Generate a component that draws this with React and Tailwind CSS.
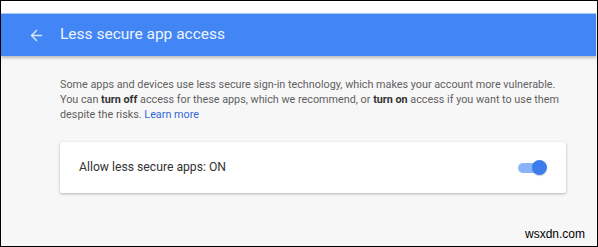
import { ArrowLeft } from "lucide-react";

const App = () => {
  return (
    <div className="h-[247px] w-[598px] overflow-hidden border border-black bg-white font-['Roboto',sans-serif]">
      <div className="flex h-full flex-col">
        {/* top white strip */}
        <div className="h-[12px] shrink-0 bg-white" />

        {/* Header */}
        <div className="z-10 mr-[1px] flex h-[43px] shrink-0 items-center border-t border-[#a9c8f7] bg-[#4285f4] shadow-[0_2px_3px_rgba(0,0,0,0.25)]">
          <ArrowLeft className="ml-[27px] h-[17px] w-[17px] text-[#dbe8fd]" strokeWidth={2} />
          <h1 className="ml-[15px] text-[15.5px] leading-none text-[#eef4fe]">Less secure app access</h1>
        </div>

        {/* Body */}
        <div className="relative flex-1 bg-[#f7f7f7] px-[59px] pt-[21px]">
          <p className="whitespace-nowrap text-[10.8px] leading-[15px] text-[#5f5f5f]">
            Some apps and devices use less secure sign-in technology, which makes your account more vulnerable.
            <br />
            You can <b className="font-bold text-[#333]">turn off</b> access for these apps, which we recommend, or{" "}
            <b className="font-bold text-[#333]">turn on</b> access if you want to use them
            <br />
            despite the risks. <span className="text-[#3367d6]">Learn more</span>
          </p>

          <div className="mr-[-28px] mt-[20px] flex h-[51px] items-center justify-between rounded-[2px] bg-white pl-[19px] pr-[19px] shadow-[0_1px_3px_rgba(0,0,0,0.28)]">
            <span className="text-[12.2px] text-[#333]">Allow less secure apps: ON</span>
            <div className="relative flex h-[14px] w-[29px] items-center">
              <div className="h-[10px] w-[27px] rounded-full bg-[#8ab4f8]" />
              <div className="absolute right-0 h-[15px] w-[15px] rounded-full bg-[#3b7ded] shadow-[0_1px_1px_rgba(0,0,0,0.2)]" />
            </div>
          </div>

          <span className="absolute bottom-[3px] right-[12px] font-['Liberation_Sans',sans-serif] text-[12px] text-black">
            wsxdn.com
          </span>
        </div>
      </div>
    </div>
  );
};

export default App;
